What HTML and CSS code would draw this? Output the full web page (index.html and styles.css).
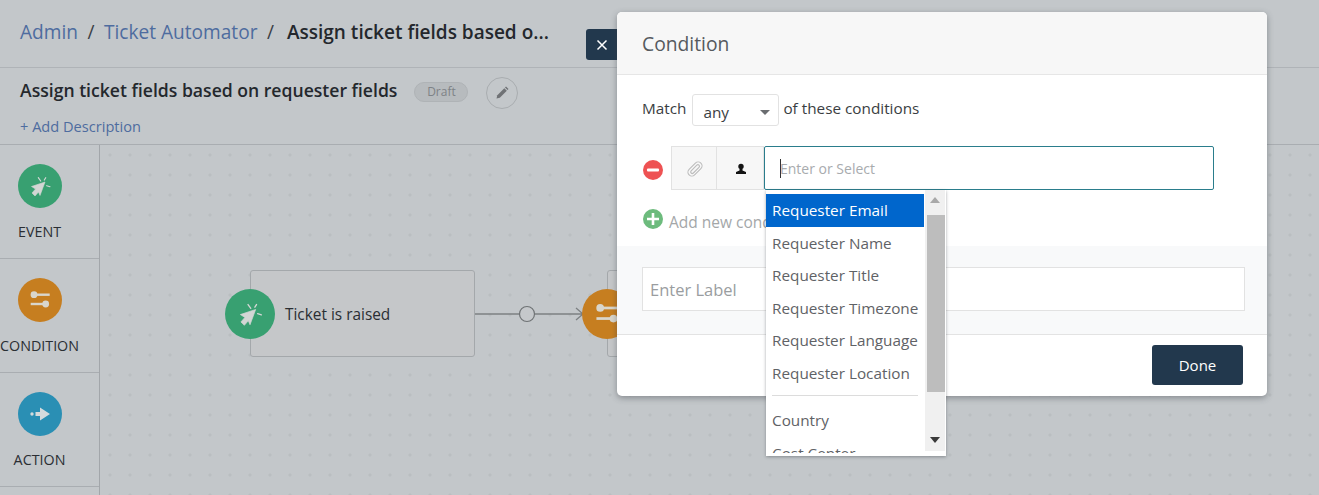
FILE: index.html
```html
<!DOCTYPE html>
<html lang="en">
<head>
<meta charset="utf-8">
<title>Ticket Automator</title>
<link rel="stylesheet" href="styles.css">
</head>
<body>
<svg class="defs" width="0" height="0" aria-hidden="true">
  <symbol id="i-event" viewBox="0 0 44 44">
    <path d="M27 18 13.500 22.500l4 2.500L14 29l3 3 3.500-4 1.500 3.500z" fill="#d3d6d4" stroke="#d3d6d4" stroke-width=".6" stroke-linejoin="round"/>
    <path d="M20.300 13.700l2.400 3.300M27.700 13.700l-1.400 2.300M28.700 21.700l3.300 1" stroke="#d3d6d4" stroke-width="1.200" fill="none" stroke-linecap="round"/>
  </symbol>
  <symbol id="i-cond" viewBox="0 0 44 44">
    <circle cx="16" cy="16.700" r="3.400" fill="#d9d6cc"/>
    <rect x="16" y="15.500" width="15.700" height="2.400" fill="#d9d6cc"/>
    <circle cx="27.700" cy="26" r="3.400" fill="#d9d6cc"/>
    <rect x="12.700" y="24.800" width="15" height="2.400" fill="#d9d6cc"/>
  </symbol>
  <symbol id="i-action" viewBox="0 0 44 44">
    <circle cx="14" cy="22" r="1.700" fill="#d5dadc"/>
    <path d="M17.500 20h4.500v-4.500L32 22l-10 6.500V24h-4.500z" fill="#d5dadc"/>
  </symbol>
</svg>

<div class="app">
  <header class="crumbs">
    <a class="crumb-link">Admin</a><span class="sep">/</span>
    <a class="crumb-link">Ticket Automator</a><span class="sep">/</span>
    <strong class="crumb-current">Assign ticket fields based o...</strong>
  </header>

  <section class="titlebar">
    <div class="title-row">
      <h1 class="title">Assign ticket fields based on requester fields</h1>
      <span class="pill">Draft</span>
      <button class="edit" aria-label="Edit">
        <svg width="16" height="16" viewBox="0 0 16 16"><path d="M2.500 13.500l.8-3.300 7-7 2.500 2.500-7 7z" fill="#6f7275"/><path d="M11 2.500l1-1 2.500 2.500-1 1z" fill="#6f7275"/></svg>
      </button>
    </div>
    <a class="add-desc">+ Add Description</a>
  </section>

  <div class="workspace">
    <aside class="palette">
      <div class="tool"><svg class="tool-icon green"><use href="#i-event"/></svg><span>EVENT</span></div>
      <div class="tool"><svg class="tool-icon orange"><use href="#i-cond"/></svg><span>CONDITION</span></div>
      <div class="tool"><svg class="tool-icon blue"><use href="#i-action"/></svg><span>ACTION</span></div>
    </aside>
    <main class="canvas">
      <div class="node node-event">Ticket is raised</div>
      <svg class="node-icon node-icon-event green"><use href="#i-event"/></svg>
      <svg class="link" width="110" height="20" viewBox="0 0 110 20">
        <path d="M0 10h44M60 10h47M101 4l7 6-7 6" fill="none" stroke="#7d8183" stroke-width="1.300"/>
        <circle cx="52" cy="10" r="7.500" fill="#c5c8cb" stroke="#6f7375" stroke-width="1.200"/>
      </svg>
      <div class="node node-cond"></div>
      <svg class="node-icon node-icon-cond orange"><use href="#i-cond"/></svg>
    </main>
  </div>
</div>

<button class="modal-close" aria-label="Close">
  <svg width="12" height="12" viewBox="0 0 12 12"><path d="M1.500 1.500l9 9M10.500 1.500l-9 9" stroke="#fff" stroke-width="1.500"/></svg>
</button>

<div class="modal">
  <div class="modal-head">Condition</div>
  <div class="modal-body">
    <div class="match">
      <span class="match-text">Match</span>
      <span class="select"><span class="select-value">any</span><i class="select-caret"></i></span>
      <span class="match-text">of these conditions</span>
    </div>
    <div class="cond-row">
      <svg class="round" width="22" height="22" viewBox="0 0 22 22"><circle cx="11" cy="11" r="10" fill="#ee5253"/><rect x="5" y="9.500" width="12" height="3" rx="1" fill="#fff"/></svg>
      <div class="cell cell-first">
        <svg width="20" height="20" viewBox="0 0 18 18"><g fill="none" stroke="#bcbcbc" stroke-width="1" transform="rotate(45 9 9)"><rect x="5.500" y="1.500" width="7" height="15" rx="3.500"/><rect x="7.700" y="4" width="2.800" height="10" rx="1.400"/></g></svg>
      </div>
      <div class="cell">
        <svg width="12" height="12" viewBox="0 0 12 12"><circle cx="6" cy="3.500" r="2.700" fill="#141414"/><path d="M4.500 6h3v1.500l3.500 1.500v2H1V9l3.500-1.500z" fill="#141414"/></svg>
      </div>
      <div class="cond-input"><i class="text-caret"></i><span>Enter or Select</span></div>
    </div>
    <div class="add-row">
      <svg class="round" width="22" height="22" viewBox="0 0 22 22"><circle cx="11" cy="11" r="10" fill="#6dbb7d"/><path d="M5 11h12M11 5v12" stroke="#fff" stroke-width="2.600"/></svg>
      <span class="add-text">Add new condition</span>
    </div>
  </div>
  <div class="label-band">
    <div class="label-input">Enter Label</div>
  </div>
  <div class="modal-foot">
    <button class="done">Done</button>
  </div>
</div>

<div class="dropdown">
  <ul class="options">
    <li class="option active">Requester Email</li>
    <li class="option">Requester Name</li>
    <li class="option">Requester Title</li>
    <li class="option">Requester Timezone</li>
    <li class="option">Requester Language</li>
    <li class="option">Requester Location</li>
    <li class="divider"></li>
    <li class="option">Country</li>
    <li class="option">Cost Center</li>
  </ul>
  <div class="scrollbar">
    <i class="arrow up"></i>
    <div class="thumb"></div>
    <i class="arrow down"></i>
  </div>
</div>
</body>
</html>
```
FILE: styles.css
```css
* { box-sizing: border-box; }
html, body { margin: 0; height: 100%; }
body {
  position: relative;
  width: 1319px;
  height: 495px;
  overflow: hidden;
  background: #c3c7ca;
  font-family: "Open Sans", "Noto Sans", sans-serif;
  color: #23272b;
}
.defs { position: absolute; }
.green { background: #38a071; }
.orange { background: #c67e20; }
.blue { background: #2a8fb4; }

.app { display: flex; flex-direction: column; height: 495px; }

.crumbs {
  height: 68px;
  flex: none;
  padding: 0 20px 4px;
  display: flex;
  align-items: center;
  font-size: 19.100px;
  border-bottom: 1px solid #afb3b7;
  white-space: nowrap;
}
.crumb-link { color: #4e6c9f; }
.sep { margin: 0 9.500px; color: #3b4046; }
.crumb-current { font-weight: 600; font-size: 19px; color: #24282d; margin-left: 3.500px; }

.titlebar {
  height: 77px;
  flex: none;
  padding: 8px 20px 0;
  border-bottom: 1px solid #a9adb1;
}
.title-row { display: flex; align-items: center; height: 32px; }
.title { margin: -4px 0 0; font-size: 17.600px; line-height: 28px; font-weight: 600; color: #24282d; white-space: nowrap; }
.pill {
  margin-left: 17px;
  width: 54px;
  height: 20px;
  border-radius: 10px;
  background: #b7bbbe;
  border: 1px solid #afb3b6;
  color: #7e8286;
  font-size: 12px;
  line-height: 18px;
  text-align: center;
}
.edit {
  margin: 2px 0 0 18px;
  width: 32px;
  height: 32px;
  border-radius: 50%;
  border: 1px solid #a9adb0;
  background: transparent;
  padding: 0;
  display: flex;
  align-items: center;
  justify-content: center;
}
.add-desc { display: block; margin-top: 8px; font-size: 14.600px; line-height: 20px; color: #4e6c9f; }

.workspace { flex: 1; display: flex; min-height: 0; }
.palette { width: 100px; flex: none; border-right: 1px solid #a2a6aa; }
.tool {
  height: 114px;
  display: flex;
  flex-direction: column;
  align-items: center;
  padding: 19px 20px 0 0;
  border-bottom: 1px solid #a9adb1;
  font-size: 14.300px;
  line-height: 20px;
  color: #2a2e33;
}
.tool span { margin-top: 14px; white-space: nowrap; }
.tool-icon { width: 44px; height: 44px; border-radius: 50%; flex: none; }

.canvas {
  position: relative;
  flex: 1;
  background-color: #c3c7ca;
  background-image: radial-gradient(circle at 10px 10px, #babec1 1.300px, transparent 1.800px);
  background-size: 20px 20px;
}
.node {
  position: absolute;
  top: 125px;
  height: 87px;
  border: 1px solid #a4a8ab;
  border-radius: 3px;
  background: #c5c7c9;
}
.node-event {
  left: 150px;
  width: 225px;
  padding-left: 34px;
  font-size: 15.400px;
  line-height: 87px;
  color: #2a2e33;
}
.node-cond { left: 507px; width: 200px; }
.node-icon { position: absolute; top: 144px; width: 50px; height: 50px; border-radius: 50%; }
.node-icon-event { left: 125px; }
.node-icon-cond { left: 482px; }
.link { position: absolute; left: 375px; top: 159px; }

.modal-close {
  position: absolute;
  left: 586px;
  top: 29px;
  width: 32px;
  height: 31px;
  border: 0;
  padding: 0;
  border-radius: 3px 0 0 3px;
  background: #22384d;
  display: flex;
  align-items: center;
  justify-content: center;
}

.modal {
  position: absolute;
  left: 617px;
  top: 12px;
  width: 650px;
  height: 384px;
  display: flex;
  flex-direction: column;
  background: #fff;
  border-radius: 5px;
  box-shadow: 0 2px 6px rgba(60, 65, 70, .45);
  overflow: hidden;
}
.modal-head {
  height: 63px;
  flex: none;
  padding: 0 25px;
  display: flex;
  align-items: center;
  background: #f7f7f7;
  border-bottom: 1px solid #e6e6e6;
  font-size: 19.300px;
  color: #565a5e;
}
.modal-body { height: 171px; flex: none; padding: 19px 25px 0; font-size: 15.300px; color: #3a3e42; }
.match { display: flex; align-items: center; height: 32px; gap: 5px; }
.match-text { padding-bottom: 5px; }
.select {
  width: 87px;
  height: 32px;
  margin: 0 -1px 0 1px;
  display: flex;
  align-items: center;
  justify-content: space-between;
  padding: 3px 8px 0 10px;
  border: 1px solid #e2e2e2;
  border-radius: 3px;
  background: #fff;
}
.select-caret {
  width: 0;
  height: 0;
  border: 5px solid transparent;
  border-top: 5px solid #6a6d70;
  border-bottom: 0;
  margin-top: 1px;
}
.cond-row { display: flex; align-items: center; margin-top: 20px; height: 44px; }
.round { flex: none; }
.cond-row .round { margin: 4px 7px 0 0; }
.cell {
  width: 47px;
  height: 44px;
  flex: none;
  display: flex;
  align-items: center;
  justify-content: center;
  padding: 2px 0 0 1px;
  background: #f7f7f7;
  border: 1px solid #e2e2e2;
  border-left: 0;
}
.cell-first { width: 46px; padding-left: 2px; border-left: 1px solid #e2e2e2; }
.cond-input {
  width: 450px;
  height: 44px;
  display: flex;
  align-items: center;
  padding-left: 15px;
  border: 1px solid #2a7d8c;
  border-radius: 2px;
  color: #a8abae;
  font-size: 14px;
}
.text-caret { width: 1px; height: 19px; background: #333; margin-right: -1px; }
.add-row { display: flex; align-items: flex-start; gap: 5px; margin-top: 18px; color: #a4a7a9; font-size: 15.500px; line-height: 22px; white-space: nowrap; }
.add-text { margin-top: 3px; }

.label-band {
  height: 89px;
  flex: none;
  padding: 21px 22px 0 25px;
  background: #f8f9fa;
  border-bottom: 1px solid #e3e3e3;
}
.label-input {
  height: 44px;
  padding-left: 7px;
  border: 1px solid #e2e2e2;
  background: #fff;
  font-size: 16.500px;
  line-height: 44px;
  color: #9a9da0;
}
.modal-foot { flex: 1; display: flex; justify-content: flex-end; padding: 10px 24px 0 0; }
.done {
  width: 91px;
  height: 40px;
  border: 0;
  border-radius: 3px;
  background: #22384d;
  color: #fff;
  font: 15px "Open Sans", "Noto Sans", sans-serif;
}

.dropdown {
  position: absolute;
  left: 766px;
  top: 190px;
  width: 180px;
  height: 266px;
  display: flex;
  padding-bottom: 3px;
  background: #fff;
  box-shadow: 0 1px 3px rgba(60, 65, 70, .45);
  overflow: hidden;
}
.options { flex: 1; margin: 0; padding: 4px 0 0; list-style: none; overflow: hidden; min-width: 0; }
.option {
  height: 32.500px;
  padding-left: 6px;
  font-size: 15.300px;
  line-height: 33px;
  color: #5f6266;
  white-space: nowrap;
}
.option.active { background: #0066cc; color: #fff; }
.divider { height: 1px; margin: 6px 6px 8px; background: #dcdcdc; }
.scrollbar {
  width: 22px;
  flex: none;
  position: relative;
  background: #f0f0f0;
  border-left: 1px solid #fff;
  border-right: 1px solid #fff;
  border-bottom: 2px solid #fff;
}
.thumb { position: absolute; left: 2px; right: 0; top: 25px; height: 177px; background: #bdbdbd; }
.arrow { position: absolute; left: 5px; width: 0; height: 0; border: 5px solid transparent; }
.arrow.up { top: 7px; border-top: 0; border-bottom: 6px solid #a8a8a8; }
.arrow.down { bottom: 8px; border-bottom: 0; border-top: 6px solid #3a3a3a; }
```
